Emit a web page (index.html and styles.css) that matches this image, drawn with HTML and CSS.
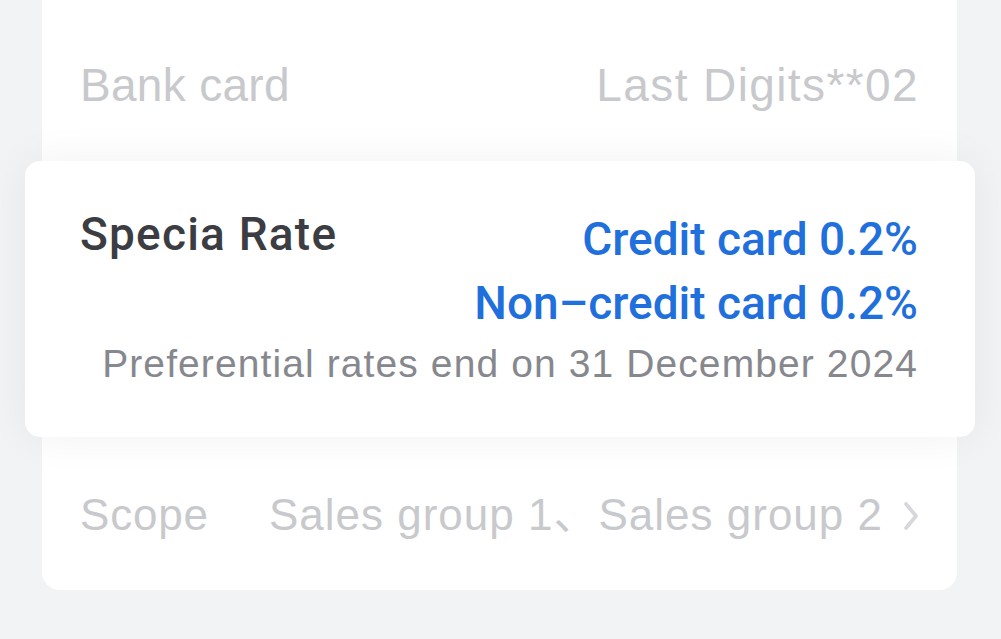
FILE: index.html
```html
<!DOCTYPE html>
<html lang="en">
<head>
<meta charset="utf-8">
<link rel="stylesheet" href="styles.css">
</head>
<body>
<div class="page">
  <div class="sheet">
    <div class="row row-bank">
      <span class="label">Bank card</span>
      <span class="value">Last Digits**02</span>
    </div>
    <div class="rate-card">
      <div class="rate-top">
        <span class="rate-title">Specia Rate</span>
        <div class="rate-values">
          <span class="rate-line">Credit card 0.2%</span>
          <span class="rate-line">Non–credit card 0.2%</span>
        </div>
      </div>
      <div class="rate-note">Preferential rates end on 31 December 2024</div>
    </div>
    <div class="row row-scope">
      <span class="label">Scope</span>
      <span class="scope-value">
        <span class="value">Sales group 1、Sales group 2</span>
        <svg class="chev" width="16" height="30" viewBox="0 0 16 30"><polyline points="3,3 13,15 3,27" fill="none" stroke="#d6d7da" stroke-width="3.6" stroke-linecap="round" stroke-linejoin="round"/></svg>
      </span>
    </div>
  </div>
</div>
</body>
</html>
```
FILE: styles.css
```css
html, body {
  margin: 0;
  padding: 0;
}
body {
  width: 1001px;
  height: 639px;
  overflow: hidden;
  background: #f2f3f5;
  font-family: "Liberation Sans", Arial, "Noto Sans CJK SC", sans-serif;
}
.page {
  padding: 0 44px 0 42px;
}
.sheet {
  background: #ffffff;
  border-radius: 0 0 18px 18px;
  display: flex;
  flex-direction: column;
}
.row {
  display: flex;
  align-items: center;
  justify-content: space-between;
  padding: 0 38px;
  color: #c8c9cc;
  font-size: 46px;
  line-height: 52px;
}
.row-bank {
  height: 161px;
  padding-top: 8px;
  box-sizing: border-box;
}
.row-scope {
  height: 153px;
  font-size: 44px;
  padding-top: 2px;
  box-sizing: border-box;
}
.label, .value {
  white-space: nowrap;
  display: block;
}
.row-bank .label {
  letter-spacing: 0.3px;
}
.row-bank .value {
  letter-spacing: 1.4px;
}
.row-scope .label {
  letter-spacing: 0.8px;
}
.row-scope .value {
  letter-spacing: 1px;
}
.scope-value {
  display: flex;
  align-items: center;
  gap: 20px;
}
.chev {
  display: block;
  margin-top: 2px;
}
.rate-card {
  margin: 0 -18px 0 -17px;
  background: #ffffff;
  border-radius: 15px;
  box-shadow: 0 0 44px rgba(0, 0, 0, 0.06);
  height: 276px;
  box-sizing: border-box;
  padding: 48px 57px 0 55px;
  position: relative;
}
.rate-top {
  display: flex;
  justify-content: space-between;
  align-items: flex-start;
}
.rate-title {
  font-family: Roboto, "Liberation Sans", sans-serif;
  font-size: 46px;
  font-weight: 500;
  color: #3b3d42;
  line-height: 50px;
  letter-spacing: 1.2px;
}
.rate-values {
  display: flex;
  flex-direction: column;
  align-items: flex-end;
  font-family: Roboto, "Liberation Sans", sans-serif;
  color: #1f6fdc;
  font-size: 46px;
  font-weight: 500;
  line-height: 64px;
  margin-top: -2px;
}
.rate-note {
  text-align: right;
  color: #86888d;
  font-size: 39px;
  letter-spacing: 1.1px;
  line-height: 50px;
  margin-top: 4px;
}
```
